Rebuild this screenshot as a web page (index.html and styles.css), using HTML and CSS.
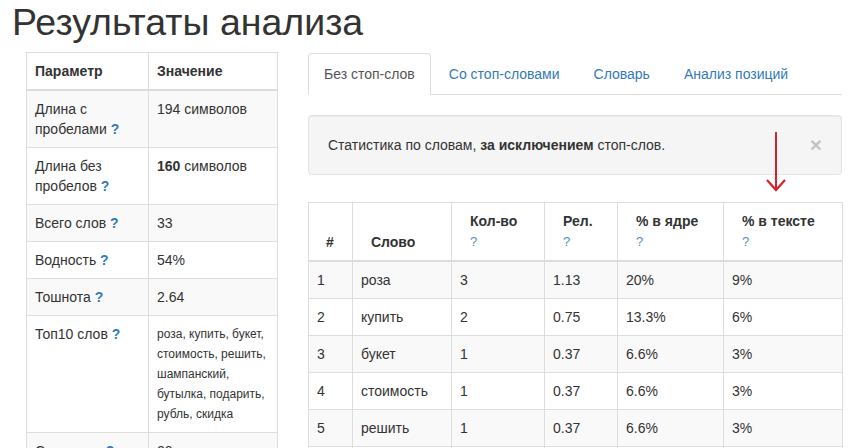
FILE: index.html
```html
<!DOCTYPE html>
<html lang="ru">
<head>
<meta charset="utf-8">
<title>Результаты анализа</title>
<link rel="stylesheet" href="styles.css">
</head>
<body>
<div class="page">
  <h1 class="title">Результаты анализа</h1>
  <div class="layout">
    <div class="left">
      <table class="tbl params">
        <colgroup><col class="c-param"><col class="c-value"></colgroup>
        <thead>
          <tr><th>Параметр</th><th>Значение</th></tr>
        </thead>
        <tbody>
          <tr><td>Длина с пробелами <span class="q">?</span></td><td>194 символов</td></tr>
          <tr><td>Длина без пробелов <span class="q">?</span></td><td><b>160</b> символов</td></tr>
          <tr><td>Всего слов <span class="q">?</span></td><td>33</td></tr>
          <tr><td>Водность <span class="q">?</span></td><td>54%</td></tr>
          <tr><td>Тошнота <span class="q">?</span></td><td>2.64</td></tr>
          <tr><td>Топ10 слов <span class="q">?</span></td><td class="small">роза, купить, букет, стоимость, решить, шампанский, бутылка, подарить, рубль, скидка</td></tr>
          <tr><td>Стоп-слов <span class="q">?</span></td><td>20</td></tr>
        </tbody>
      </table>
    </div>
    <div class="right">
      <ul class="tabs">
        <li class="tab active"><a>Без стоп-слов</a></li>
        <li class="tab"><a>Со стоп-словами</a></li>
        <li class="tab"><a>Словарь</a></li>
        <li class="tab"><a>Анализ позиций</a></li>
      </ul>
      <div class="well">
        <span>Статистика по словам, <b>за исключением</b> стоп-слов.</span>
        <span class="close">×</span>
      </div>
      <svg class="arrow" width="22" height="62" viewBox="0 0 22 62">
        <path d="M11 1 V59" stroke="#d8222b" stroke-width="2" fill="none"/>
        <path d="M2 49 L11 59 L20 49" stroke="#d8222b" stroke-width="2.2" fill="none"/>
      </svg>
      <table class="tbl words">
        <colgroup>
          <col class="w1"><col class="w2"><col class="w3"><col class="w4"><col class="w5"><col class="w6">
        </colgroup>
        <thead>
          <tr>
            <th>#</th>
            <th>Слово</th>
            <th>Кол-во<br><span class="hq">?</span></th>
            <th>Рел.<br><span class="hq">?</span></th>
            <th>% в ядре<br><span class="hq">?</span></th>
            <th>% в тексте<br><span class="hq">?</span></th>
          </tr>
        </thead>
        <tbody>
          <tr><td>1</td><td>роза</td><td>3</td><td>1.13</td><td>20%</td><td>9%</td></tr>
          <tr><td>2</td><td>купить</td><td>2</td><td>0.75</td><td>13.3%</td><td>6%</td></tr>
          <tr><td>3</td><td>букет</td><td>1</td><td>0.37</td><td>6.6%</td><td>3%</td></tr>
          <tr><td>4</td><td>стоимость</td><td>1</td><td>0.37</td><td>6.6%</td><td>3%</td></tr>
          <tr><td>5</td><td>решить</td><td>1</td><td>0.37</td><td>6.6%</td><td>3%</td></tr>
          <tr><td>6</td><td>шампанский</td><td>1</td><td>0.37</td><td>6.6%</td><td>3%</td></tr>
        </tbody>
      </table>
    </div>
  </div>
</div>
</body>
</html>
```
FILE: styles.css
```css
html, body {
  margin: 0;
  padding: 0;
  background: #fff;
}
body {
  font-family: "Liberation Sans", Arial, sans-serif;
  font-size: 14px;
  line-height: 20px;
  color: #333;
  overflow: hidden;
}
.page {
  padding: 2px 0 0 12px;
}
.title {
  margin: 0 0 9px 0;
  font-size: 37.5px;
  line-height: 41px;
  font-weight: normal;
  color: #333;
}
.layout {
  display: flex;
  align-items: flex-start;
  padding-left: 14px;
  gap: 31px;
}
.left {
  width: 251px;
  flex: none;
}
.right {
  width: 534px;
  flex: none;
  position: relative;
  padding-top: 1px;
}
.tbl {
  border-collapse: collapse;
  table-layout: fixed;
  width: 100%;
}
.tbl th,
.tbl td {
  border: 1px solid #ddd;
  padding: 8px;
  text-align: left;
  vertical-align: top;
}
.tbl thead th {
  border-bottom: 2px solid #ddd;
  font-weight: bold;
  vertical-align: bottom;
}
.tbl tbody tr:nth-child(odd) {
  background: #f9f9f9;
}
.c-param { width: 122px; }
.c-value { width: 129px; }
.q {
  color: #337ab7;
  font-weight: bold;
}
.small {
  font-size: 12px;
}
.tabs {
  list-style: none;
  margin: 0 0 20px 0;
  padding: 0;
  display: flex;
  border-bottom: 1px solid #ddd;
}
.tab {
  margin-right: 2px;
  margin-bottom: -1px;
}
.tab a {
  display: block;
  padding: 10px 15px;
  line-height: 20px;
  color: #337ab7;
  border: 1px solid transparent;
  border-radius: 4px 4px 0 0;
}
.tab.active a {
  color: #555;
  background: #fff;
  border-color: #ddd #ddd transparent #ddd;
}
.well {
  display: flex;
  justify-content: space-between;
  align-items: center;
  padding: 19px;
  background: #f5f5f5;
  border: 1px solid #e3e3e3;
  border-radius: 4px;
  box-shadow: inset 0 1px 1px rgba(0, 0, 0, 0.05);
  margin-bottom: 27px;
}
.close {
  font-size: 21px;
  font-weight: bold;
  line-height: 20px;
  color: #000;
  opacity: 0.2;
}
.arrow {
  position: absolute;
  left: 457px;
  top: 79px;
}
.words thead th {
  padding-left: 18px;
}
.words thead th:first-child {
  padding-left: 17px;
}
.w1 { width: 44px; }
.w2 { width: 99px; }
.w3 { width: 93px; }
.w4 { width: 73px; }
.w5 { width: 106px; }
.w6 { width: 119px; }
.hq {
  color: #5a8dc4;
  font-weight: normal;
  font-size: 13px;
}
```
